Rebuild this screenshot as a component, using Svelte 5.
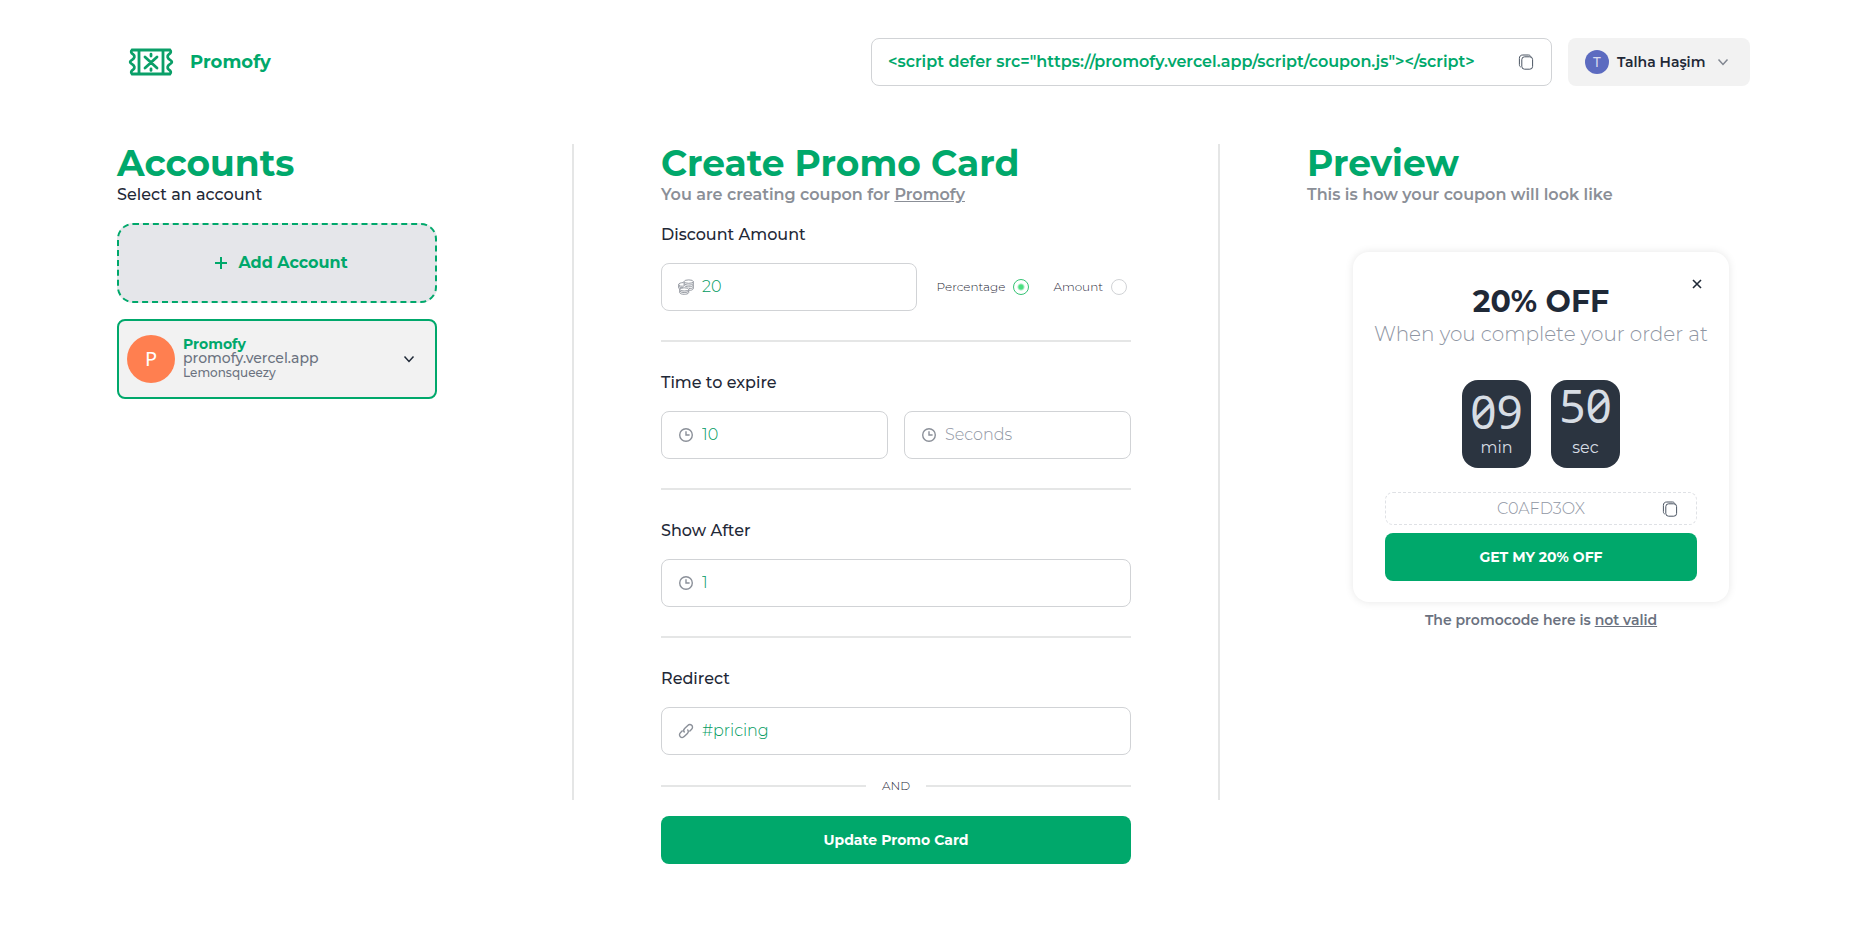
<script lang="ts">
    interface Account {
        name: string;
        domain: string;
        provider: string;
    }

    const user = { name: 'Talha Haşim', initial: 'T' };
    const accounts: Account[] = [
        { name: 'Promofy', domain: 'promofy.vercel.app', provider: 'Lemonsqueezy' }
    ];
    const embedCode = '<script defer src="https://promofy.vercel.app/script/coupon.js"></' + 'script>';

    let selected = accounts[0];
    let discount = '20';
    let discountType = 'percentage';
    let minutes = '10';
    let seconds = '';
    let showAfter = '1';
    let redirect = '#pricing';
    let code = 'C0AFD3OX';

    $: offer = discountType === 'percentage' ? `${discount}% OFF` : `$${discount} OFF`;

    function copy(text: string) {
        navigator.clipboard?.writeText(text);
    }
</script>

{#snippet copyIcon()}
    <svg class="icon-copy" viewBox="0 0 16 16" aria-hidden="true">
        <rect x="3.8" y="2.8" width="10.8" height="12.4" rx="2.8" />
        <path d="M2.6 13C1.6 12.4 1.4 11.6 1.4 10.6V4.4C1.4 2.2 2.6 1 4.8 1H10.4C11.6 1 12.4 1.6 12.9 2.6" />
    </svg>
{/snippet}

{#snippet clockIcon()}
    <svg class="icon-field" viewBox="0 0 16 16" aria-hidden="true">
        <circle cx="8" cy="8" r="6.3" />
        <path d="M8 4.2V8H11.6" />
    </svg>
{/snippet}

<header class="header">
    <a class="brand" href="/">
        <svg class="logo" viewBox="0 0 46 28" aria-hidden="true">
            <path d="M4 2H42C43.6 3.4 42.6 5.4 41 6.2C38.6 7.8 39.6 10.4 41.6 11.6C44.6 13.4 44.6 14.6 41.6 16.4C39.6 17.6 38.6 20.2 41 21.8C42.6 22.6 43.6 24.6 42 26H4C2.4 24.6 3.4 22.6 5 21.8C7.4 20.2 6.4 17.6 4.4 16.4C1.4 14.6 1.4 13.4 4.4 11.6C6.4 10.4 7.4 7.8 5 6.2C3.4 5.4 2.4 3.4 4 2Z" />
            <path d="M11 2V26M35 2V26" />
            <path d="M17 9L29 20M29 9L17 20M23 6.2V8M23 20.8V22.4" stroke-linecap="round" />
        </svg>
        <span>Promofy</span>
    </a>
    <div class="header-right">
        <div class="embed">
            <code>{embedCode}</code>
            <button class="icon-button" aria-label="Copy script" on:click={() => copy(embedCode)}>
                {@render copyIcon()}
            </button>
        </div>
        <button class="user">
            <span class="user-avatar">{user.initial}</span>
            <span>{user.name}</span>
            <svg class="chevron" viewBox="0 0 12 12" aria-hidden="true"><path d="M1.5 3.5L6 8.5L10.5 3.5" /></svg>
        </button>
    </div>
</header>

<main class="columns">
    <section class="accounts">
        <h1>Accounts</h1>
        <p class="lead dark">Select an account</p>
        <button class="add-account">
            <svg viewBox="0 0 14 14" aria-hidden="true"><path d="M7 1V13M1 7H13" /></svg>
            Add Account
        </button>
        {#each accounts as account}
            <button class="account" class:active={account === selected} on:click={() => (selected = account)}>
                <span class="account-avatar">{account.name[0]}</span>
                <span class="account-text">
                    <span class="account-name">{account.name}</span>
                    <span class="account-domain">{account.domain}</span>
                    <span class="account-provider">{account.provider}</span>
                </span>
                <svg class="chevron" viewBox="0 0 12 12" aria-hidden="true"><path d="M1.5 3.5L6 8.5L10.5 3.5" /></svg>
            </button>
        {/each}
    </section>

    <div class="divider"></div>

    <section class="panel">
        <h1>Create Promo Card</h1>
        <p class="lead">You are creating coupon for <u>{selected.name}</u></p>

        <form on:submit|preventDefault>
            <label class="title" for="discount">Discount Amount</label>
            <div class="row">
                <div class="field discount">
                    <svg class="icon-field coins" viewBox="0 0 16 16" aria-hidden="true">
                        <ellipse cx="10.7" cy="2.6" rx="4.6" ry="1.7" />
                        <path d="M6.1 2.6V6.2C7 8.4 14.4 8.4 15.3 6.2V2.6M6.1 4.6C7.6 6.6 13.8 6.6 15.3 4.6M15.3 6.2V9.8C14.6 11 13 11.4 11.2 11.4M15.3 8.2C14.4 9.4 12.8 9.6 11 9.6" />
                        <path d="M5.6 3.6C2.8 3.6 0.7 4.4 0.7 5.4C0.7 7.4 4 7.4 6 7M0.7 5.4V9C0.9 9.8 1.6 10 2.4 10.2M0.7 7.2C1.4 8.4 3 8.8 4.8 8.6" />
                        <ellipse cx="6.2" cy="10.4" rx="4.5" ry="1.6" />
                        <path d="M1.7 10.4V13.8C2.6 15.8 9.8 15.8 10.7 13.8V10.4M1.7 12.2C2.8 14 9.6 14 10.7 12.2" />
                    </svg>
                    <input id="discount" type="text" bind:value={discount} />
                </div>
                <label class="radio">
                    Percentage
                    <input type="radio" name="type" value="percentage" bind:group={discountType} />
                </label>
                <label class="radio">
                    Amount
                    <input type="radio" name="type" value="amount" bind:group={discountType} />
                </label>
            </div>

            <hr />

            <label class="title" for="minutes">Time to expire</label>
            <div class="row">
                <div class="field">
                    {@render clockIcon()}
                    <input id="minutes" type="text" placeholder="Minutes" bind:value={minutes} />
                </div>
                <div class="field">
                    {@render clockIcon()}
                    <input type="text" placeholder="Seconds" aria-label="Seconds" bind:value={seconds} />
                </div>
            </div>

            <hr />

            <label class="title" for="show-after">Show After</label>
            <div class="field">
                {@render clockIcon()}
                <input id="show-after" type="text" bind:value={showAfter} />
            </div>

            <hr />

            <label class="title" for="redirect">Redirect</label>
            <div class="field">
                <svg class="icon-field" viewBox="0 0 16 16" aria-hidden="true">
                    <path d="M6.6 9.6C5.4 8.4 5.4 6.8 6.6 5.6L9.8 2.4C11 1.2 12.6 1.2 13.7 2.3C14.8 3.4 14.8 5 13.6 6.2L11.4 8.4" />
                    <path d="M9.4 6.4C10.6 7.6 10.6 9.2 9.4 10.4L6.2 13.6C5 14.8 3.4 14.8 2.3 13.7C1.2 12.6 1.2 11 2.4 9.8L4.6 7.6" />
                </svg>
                <input id="redirect" type="text" bind:value={redirect} />
            </div>

            <div class="and">AND</div>
            <button class="primary" type="submit">Update Promo Card</button>
        </form>
    </section>

    <div class="divider"></div>

    <section class="panel">
        <h1>Preview</h1>
        <p class="lead">This is how your coupon will look like</p>

        <div class="card">
            <button class="close" aria-label="Close">
                <svg viewBox="0 0 10 10" aria-hidden="true"><path d="M1 1L9 9M9 1L1 9" /></svg>
            </button>
            <h2>{offer}</h2>
            <p class="card-text">When you complete your order at</p>
            <div class="timer">
                <div class="unit">
                    <span class="digits">09</span>
                    <span>min</span>
                </div>
                <div class="unit ticking">
                    <span class="digits">50</span>
                    <span>sec</span>
                </div>
            </div>
            <div class="coupon">
                <span>{code}</span>
                <button class="icon-button" aria-label="Copy code" on:click={() => copy(code)}>
                    {@render copyIcon()}
                </button>
            </div>
            <button class="primary">GET MY {offer}</button>
        </div>
        <p class="note">The promocode here is <u>not valid</u></p>
    </section>
</main>

<style>
    :global(body) {
        background: #fff;
        color: #1f2937;
        font-family: Montserrat, Inter, sans-serif;
        font-size: 16px;
        line-height: 24px;
    }

    :global(*) {
        box-sizing: border-box;
    }

    h1,
    h2,
    p {
        margin: 0;
    }

    button {
        padding: 0;
        border: 0;
        background: none;
        color: inherit;
        font: inherit;
        cursor: pointer;
    }

    svg {
        flex: none;
        fill: none;
        stroke: currentColor;
    }

    .header {
        display: flex;
        align-items: center;
        justify-content: space-between;
        padding: 38px 121px 0 128px;
    }

    .brand {
        display: flex;
        align-items: center;
        gap: 16px;
        color: #00a86b;
        font-size: 18px;
        font-weight: 700;
        text-decoration: none;
    }

    .logo {
        width: 46px;
        height: 28px;
        stroke: #0a9f68;
        stroke-width: 2.8;
    }

    .header-right {
        display: flex;
        gap: 16px;
    }

    .embed {
        display: flex;
        align-items: center;
        justify-content: space-between;
        width: 681px;
        height: 48px;
        padding: 0 16px;
        border: 1px solid #d1d3d6;
        border-radius: 8px;
        color: #00a86b;
    }

    .embed code {
        font-family: inherit;
        font-size: 16px;
        font-weight: 600;
        white-space: nowrap;
    }

    .icon-button {
        display: flex;
        color: #4b5563;
    }

    .icon-copy {
        width: 18px;
        height: 16px;
    }

    .user {
        display: flex;
        align-items: center;
        gap: 8px;
        width: 182px;
        height: 48px;
        padding: 0 21px 0 17px;
        border-radius: 8px;
        background: #f2f2f2;
        font-size: 14px;
        font-weight: 600;
    }

    .user-avatar {
        width: 24px;
        height: 24px;
        border-radius: 50%;
        background: #5c6bc0;
        color: #d9dcf0;
        font-family: "Noto Sans", sans-serif;
        font-size: 14px;
        font-weight: 400;
    }

    .chevron {
        width: 12px;
        height: 12px;
        margin-left: auto;
        stroke-width: 1.5;
    }

    .user .chevron {
        color: #808690;
    }

    .columns {
        display: grid;
        grid-template-columns: 455fr 2px 644fr 2px 642fr;
        align-items: start;
        padding: 58px 9px 48px 117px;
    }

    .divider {
        height: calc(100vh - 278px);
        background: #e5e6e6;
    }

    .panel {
        padding: 0 87px;
    }

    h1 {
        color: #00a86b;
        font-size: 36px;
        font-weight: 700;
        line-height: 39px;
    }

    .lead {
        margin-bottom: 16px;
        color: #8b8f97;
        font-weight: 600;
    }

    .lead.dark {
        color: #1f2937;
        font-weight: 500;
    }

    .accounts {
        max-width: 320px;
    }

    .add-account {
        display: flex;
        align-items: center;
        justify-content: center;
        gap: 10px;
        width: 100%;
        height: 80px;
        margin-bottom: 16px;
        padding-left: 8px;
        border: 2px dashed #00a86b;
        border-radius: 16px;
        background: #e5e6ea;
        color: #00a86b;
        font-weight: 700;
    }

    .add-account svg {
        width: 14px;
        height: 14px;
        stroke-width: 2;
    }

    .account {
        display: flex;
        align-items: center;
        gap: 8px;
        width: 100%;
        height: 80px;
        padding: 0 20px 0 8px;
        border: 2px solid transparent;
        border-radius: 8px;
        background: #f2f2f2;
        text-align: left;
    }

    .account.active {
        border-color: #00a86b;
    }

    .account-avatar {
        width: 48px;
        height: 48px;
        border-radius: 50%;
        background: #ff7f50;
        color: #fff;
        font-family: "Noto Sans", sans-serif;
        font-size: 20px;
        line-height: 48px;
        text-align: center;
    }

    .account-text {
        display: flex;
        flex-direction: column;
        color: #6b7280;
        font-weight: 500;
        line-height: 14px;
    }

    .account-name {
        color: #00a86b;
        font-size: 14px;
        font-weight: 700;
    }

    .account-domain {
        font-size: 14px;
    }

    .account-provider {
        font-size: 12px;
        line-height: 16px;
    }

    .title {
        display: block;
        margin-bottom: 16px;
        font-weight: 500;
    }

    .row {
        display: flex;
        align-items: center;
        gap: 16px;
    }

    .field {
        display: flex;
        flex: 1;
        align-items: center;
        gap: 8px;
        height: 48px;
        padding: 0 16px;
        border: 1px solid #d1d3d6;
        border-radius: 8px;
    }

    .field input {
        width: 100%;
        min-width: 0;
        padding: 0;
        border: 0;
        outline: 0;
        background: none;
        color: #009a60;
        font: inherit;
        font-weight: 300;
    }

    .field input::placeholder {
        color: #8f96a3;
        opacity: 1;
    }

    .icon-field {
        width: 16px;
        height: 16px;
        color: #8b9099;
        stroke-width: 1.4;
    }

    .coins {
        stroke-width: 0.9;
    }

    .radio {
        display: flex;
        align-items: center;
        gap: 8px;
        padding: 0 4px;
        font-size: 12px;
        font-weight: 300;
    }

    .radio input {
        width: 16px;
        height: 16px;
        margin: 0;
        border: 1px solid #d1d3d6;
        border-radius: 50%;
        appearance: none;
    }

    .radio input:checked {
        border-color: #36c374;
        background: radial-gradient(circle, #4ade80 2px, transparent 4px);
    }

    hr {
        height: 2px;
        margin: 29px 0;
        border: 0;
        background: #e5e6e6;
    }

    .and {
        display: flex;
        align-items: center;
        gap: 16px;
        margin: 23px 0 22px;
        font-size: 12px;
        font-weight: 300;
        line-height: 16px;
    }

    .and::before,
    .and::after {
        flex: 1;
        height: 2px;
        background: #e5e6e6;
        content: "";
    }

    .primary {
        width: 100%;
        height: 48px;
        border-radius: 8px;
        background: #00a86b;
        color: #fff;
        font-size: 14px;
        font-weight: 700;
    }

    .card {
        position: relative;
        max-width: 376px;
        margin: 45px auto 8px;
        padding: 32px 32px 21px;
        border-radius: 16px;
        box-shadow: 0 0 8px rgba(0, 0, 0, 0.1);
        text-align: center;
    }

    .close {
        position: absolute;
        top: 22px;
        right: 22px;
        display: flex;
        padding: 5px;
    }

    .close svg {
        width: 10px;
        height: 10px;
        stroke-width: 1.6;
    }

    h2 {
        font-size: 30px;
        font-weight: 700;
        line-height: 36px;
    }

    .card-text {
        margin: 0 -16px 32px;
        color: #8f96a3;
        font-size: 20px;
        font-weight: 300;
        line-height: 28px;
        white-space: nowrap;
    }

    .timer {
        display: flex;
        justify-content: center;
        gap: 20px;
        margin-bottom: 24px;
    }

    .unit {
        display: flex;
        flex-direction: column;
        justify-content: space-between;
        width: 69px;
        height: 88px;
        padding: 7px 0 8px;
        border-radius: 16px;
        background: #2b3440;
        color: #d7dde4;
    }

    .ticking {
        padding-top: 1px;
    }

    .digits {
        font-family: "Noto Sans", sans-serif;
        font-size: 46px;
        font-variant-numeric: slashed-zero;
        line-height: 48px;
    }

    .coupon {
        position: relative;
        height: 33px;
        margin-bottom: 8px;
        padding: 4px;
        border: 1px dashed #dfe1e5;
        border-radius: 8px;
        color: #8f96a3;
        font-weight: 300;
    }

    .coupon .icon-button {
        position: absolute;
        top: 8px;
        right: 17px;
    }

    .note {
        color: #6b7280;
        font-size: 14px;
        font-weight: 600;
        line-height: 20px;
        text-align: center;
    }
</style>
